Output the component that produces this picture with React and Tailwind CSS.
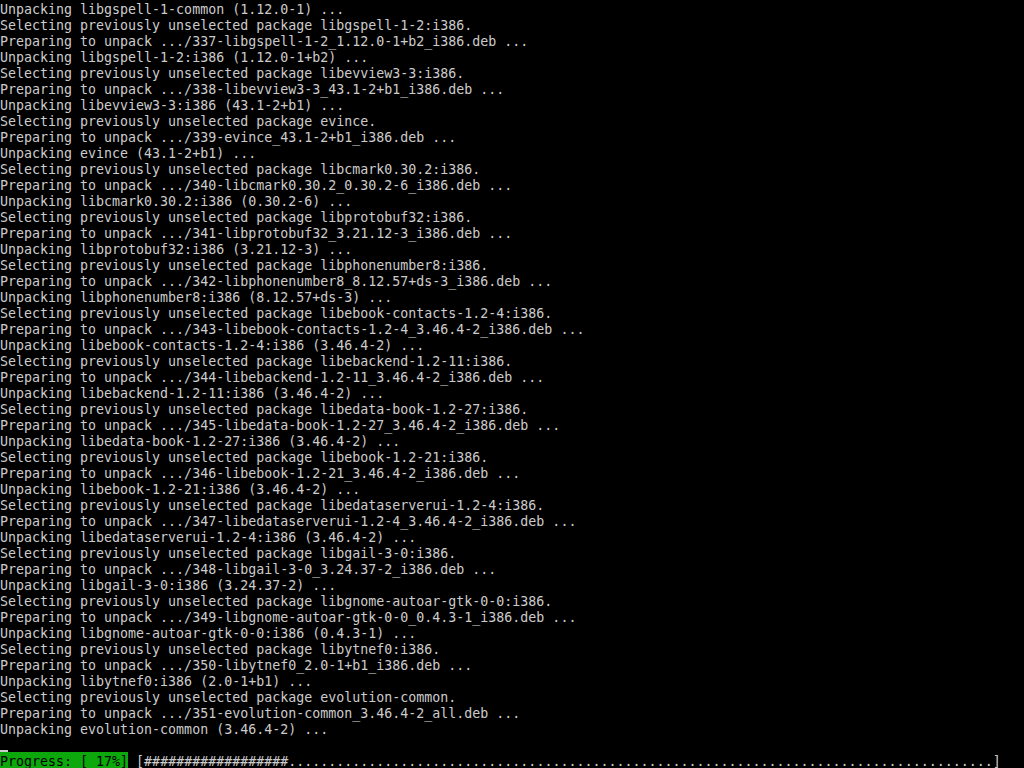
import React from "react";

const lines = [
  "Unpacking libgspell-1-common (1.12.0-1) ...",
  "Selecting previously unselected package libgspell-1-2:i386.",
  "Preparing to unpack .../337-libgspell-1-2_1.12.0-1+b2_i386.deb ...",
  "Unpacking libgspell-1-2:i386 (1.12.0-1+b2) ...",
  "Selecting previously unselected package libevview3-3:i386.",
  "Preparing to unpack .../338-libevview3-3_43.1-2+b1_i386.deb ...",
  "Unpacking libevview3-3:i386 (43.1-2+b1) ...",
  "Selecting previously unselected package evince.",
  "Preparing to unpack .../339-evince_43.1-2+b1_i386.deb ...",
  "Unpacking evince (43.1-2+b1) ...",
  "Selecting previously unselected package libcmark0.30.2:i386.",
  "Preparing to unpack .../340-libcmark0.30.2_0.30.2-6_i386.deb ...",
  "Unpacking libcmark0.30.2:i386 (0.30.2-6) ...",
  "Selecting previously unselected package libprotobuf32:i386.",
  "Preparing to unpack .../341-libprotobuf32_3.21.12-3_i386.deb ...",
  "Unpacking libprotobuf32:i386 (3.21.12-3) ...",
  "Selecting previously unselected package libphonenumber8:i386.",
  "Preparing to unpack .../342-libphonenumber8_8.12.57+ds-3_i386.deb ...",
  "Unpacking libphonenumber8:i386 (8.12.57+ds-3) ...",
  "Selecting previously unselected package libebook-contacts-1.2-4:i386.",
  "Preparing to unpack .../343-libebook-contacts-1.2-4_3.46.4-2_i386.deb ...",
  "Unpacking libebook-contacts-1.2-4:i386 (3.46.4-2) ...",
  "Selecting previously unselected package libebackend-1.2-11:i386.",
  "Preparing to unpack .../344-libebackend-1.2-11_3.46.4-2_i386.deb ...",
  "Unpacking libebackend-1.2-11:i386 (3.46.4-2) ...",
  "Selecting previously unselected package libedata-book-1.2-27:i386.",
  "Preparing to unpack .../345-libedata-book-1.2-27_3.46.4-2_i386.deb ...",
  "Unpacking libedata-book-1.2-27:i386 (3.46.4-2) ...",
  "Selecting previously unselected package libebook-1.2-21:i386.",
  "Preparing to unpack .../346-libebook-1.2-21_3.46.4-2_i386.deb ...",
  "Unpacking libebook-1.2-21:i386 (3.46.4-2) ...",
  "Selecting previously unselected package libedataserverui-1.2-4:i386.",
  "Preparing to unpack .../347-libedataserverui-1.2-4_3.46.4-2_i386.deb ...",
  "Unpacking libedataserverui-1.2-4:i386 (3.46.4-2) ...",
  "Selecting previously unselected package libgail-3-0:i386.",
  "Preparing to unpack .../348-libgail-3-0_3.24.37-2_i386.deb ...",
  "Unpacking libgail-3-0:i386 (3.24.37-2) ...",
  "Selecting previously unselected package libgnome-autoar-gtk-0-0:i386.",
  "Preparing to unpack .../349-libgnome-autoar-gtk-0-0_0.4.3-1_i386.deb ...",
  "Unpacking libgnome-autoar-gtk-0-0:i386 (0.4.3-1) ...",
  "Selecting previously unselected package libytnef0:i386.",
  "Preparing to unpack .../350-libytnef0_2.0-1+b1_i386.deb ...",
  "Unpacking libytnef0:i386 (2.0-1+b1) ...",
  "Selecting previously unselected package evolution-common.",
  "Preparing to unpack .../351-evolution-common_3.46.4-2_all.deb ...",
  "Unpacking evolution-common (3.46.4-2) ...",
];

const bar = "[" + "#".repeat(18) + ".".repeat(88) + "]";

export default function App() {
  return (
    <div
      className="w-[1024px] h-[768px] bg-black text-[#cccccc] overflow-hidden flex flex-col text-[13.3px] leading-[16px]"
      style={{ fontFamily: '"DejaVu Sans Mono", "Liberation Mono", monospace' }}
    >
      {lines.map((l, i) => (
        <div key={i} className="h-[16px] pt-[2px] whitespace-pre overflow-visible">
          {l}
        </div>
      ))}
      <div className="h-[16px] flex flex-col justify-end">
        <div className="w-[8px] h-[2px] bg-[#cccccc]" />
      </div>
      <div className="h-[16px] flex whitespace-pre">
        <span className="h-[16px] pt-[2px] bg-[#0ca80c] text-black">Progress: [ 17%]</span>
        <span className="pt-[2px]"> </span>
        <span className="pt-[2px]">{bar}</span>
      </div>
    </div>
  );
}
